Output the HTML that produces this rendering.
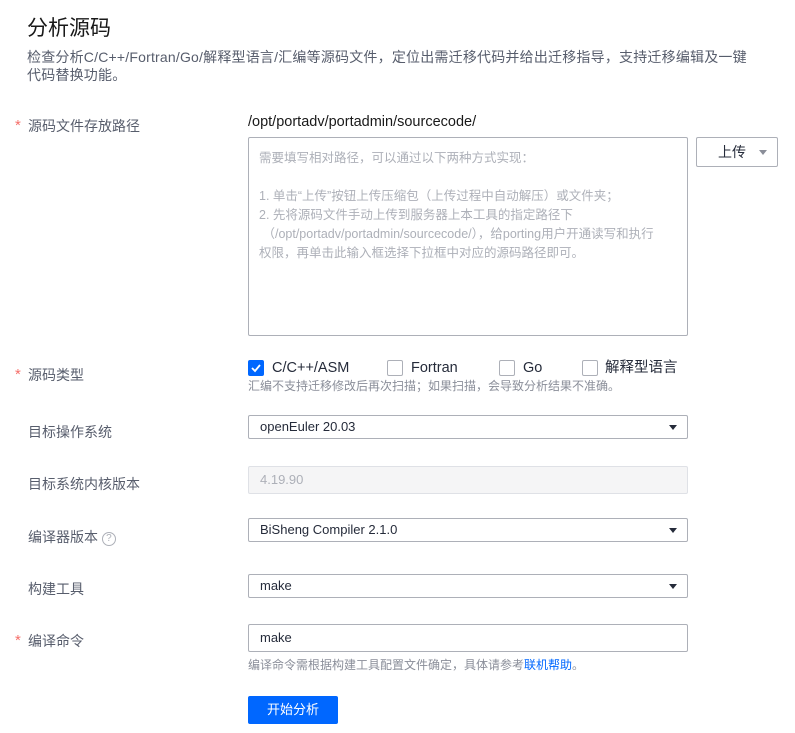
<!DOCTYPE html>
<html><head><meta charset="utf-8"><style>
*{margin:0;padding:0;box-sizing:border-box}
body{width:795px;height:733px;background:#fff;font-family:"Liberation Sans","Noto Sans CJK SC",sans-serif;position:relative;overflow:hidden;color:#252b3a}
.a{position:absolute;white-space:nowrap}
.t{left:27px;top:12px;font-size:21px;color:#191919}
.d{left:27px;font-size:14px;color:#575d6c;line-height:18px;letter-spacing:0.2px}
.l{left:28px;font-size:14px;color:#575d6c}
.s{left:15px;font-size:15px;color:#f66f6a}
.box{position:absolute;left:248px;width:440px;border:1px solid #adb0b8;border-radius:2px;font-size:13px;color:#252b3a;padding-left:11px}
.arr{position:absolute;right:10px;top:50%;margin-top:-2px;width:0;height:0;border-left:4px solid transparent;border-right:4px solid transparent;border-top:5px solid #252b3a}
.cb{position:absolute;top:360px;width:16px;height:16px;border:1px solid #adb0b8;border-radius:2px}
.cl{top:359px;font-size:14.5px;color:#252b3a;line-height:18px;height:18px}
.h{font-size:12px;color:#8a8e99}
</style></head><body>
<div class="a t">分析源码</div>
<div class="a d" style="top:48px">检查分析C/C++/Fortran/Go/解释型语言/汇编等源码文件，定位出需迁移代码并给出迁移指导，支持迁移编辑及一键</div>
<div class="a d" style="top:66px">代码替换功能。</div>

<div class="a s" style="top:117px">*</div>
<div class="a l" style="top:116px">源码文件存放路径</div>
<div class="a" style="left:248px;top:114px;font-size:14.5px;color:#191919">/opt/portadv/portadmin/sourcecode/</div>
<div class="box" style="top:137px;height:199px;padding:11px 10px;font-size:12.5px;color:#adb0b8;line-height:19px;white-space:normal">
需要填写相对路径，可以通过以下两种方式实现：<br><br>
1. 单击“上传”按钮上传压缩包（上传过程中自动解压）或文件夹；<br>
2. 先将源码文件手动上传到服务器上本工具的指定路径下<br>
&nbsp;（/opt/portadv/portadmin/sourcecode/），给porting用户开通读写和执行<br>
权限，再单击此输入框选择下拉框中对应的源码路径即可。
</div>
<div class="a" style="left:696px;top:137px;width:82px;height:30px;border:1px solid #adb0b8;border-radius:2px;font-size:14px;line-height:28px;padding-left:21px;color:#252b3a">上传<span style="position:absolute;left:62px;top:12px;border-left:4px solid transparent;border-right:4px solid transparent;border-top:5px solid #8a8e99"></span></div>

<div class="a s" style="top:366px">*</div>
<div class="a l" style="top:365px">源码类型</div>
<div class="cb" style="left:248px;background:#0067ff;border-color:#0067ff"><svg width="14" height="14" viewBox="0 0 14 14" style="position:absolute;left:0;top:0"><path d="M3 7l3 3 5-6" stroke="#fff" stroke-width="1.8" fill="none"/></svg></div>
<div class="a cl" style="left:272px">C/C++/ASM</div>
<div class="cb" style="left:387px"></div><div class="a cl" style="left:411px">Fortran</div>
<div class="cb" style="left:499px"></div><div class="a cl" style="left:523px">Go</div>
<div class="cb" style="left:582px"></div><div class="a cl" style="left:605px">解释型语言</div>
<div class="a h" style="left:248px;top:377px">汇编不支持迁移修改后再次扫描；如果扫描，会导致分析结果不准确。</div>

<div class="a l" style="top:422px">目标操作系统</div>
<div class="box" style="top:415px;height:24px;line-height:22px">openEuler 20.03<span class="arr"></span></div>
<div class="a l" style="top:474px">目标系统内核版本</div>
<div class="box" style="top:466px;height:28px;line-height:26px;background:#f5f5f6;border-color:#dfe1e6;color:#adb0b8">4.19.90</div>
<div class="a l" style="top:527px">编译器版本 <span style="display:inline-block;width:14px;height:14px;border:1px solid #adb0b8;border-radius:50%;font-size:10px;line-height:12px;text-align:center;color:#adb0b8;vertical-align:1px">?</span></div>
<div class="box" style="top:518px;height:24px;line-height:22px">BiSheng Compiler 2.1.0<span class="arr"></span></div>
<div class="a l" style="top:579px">构建工具</div>
<div class="box" style="top:574px;height:24px;line-height:22px">make<span class="arr"></span></div>
<div class="a s" style="top:632px">*</div>
<div class="a l" style="top:631px">编译命令</div>
<div class="box" style="top:624px;height:28px;line-height:26px">make</div>
<div class="a h" style="left:248px;top:656px">编译命令需根据构建工具配置文件确定，具体请参考<span style="color:#0067ff">联机帮助</span>。</div>
<div class="a" style="left:248px;top:696px;width:90px;height:28px;background:#0067ff;border-radius:2px;color:#fff;font-size:13px;line-height:28px;text-align:center">开始分析</div>
</body></html>
